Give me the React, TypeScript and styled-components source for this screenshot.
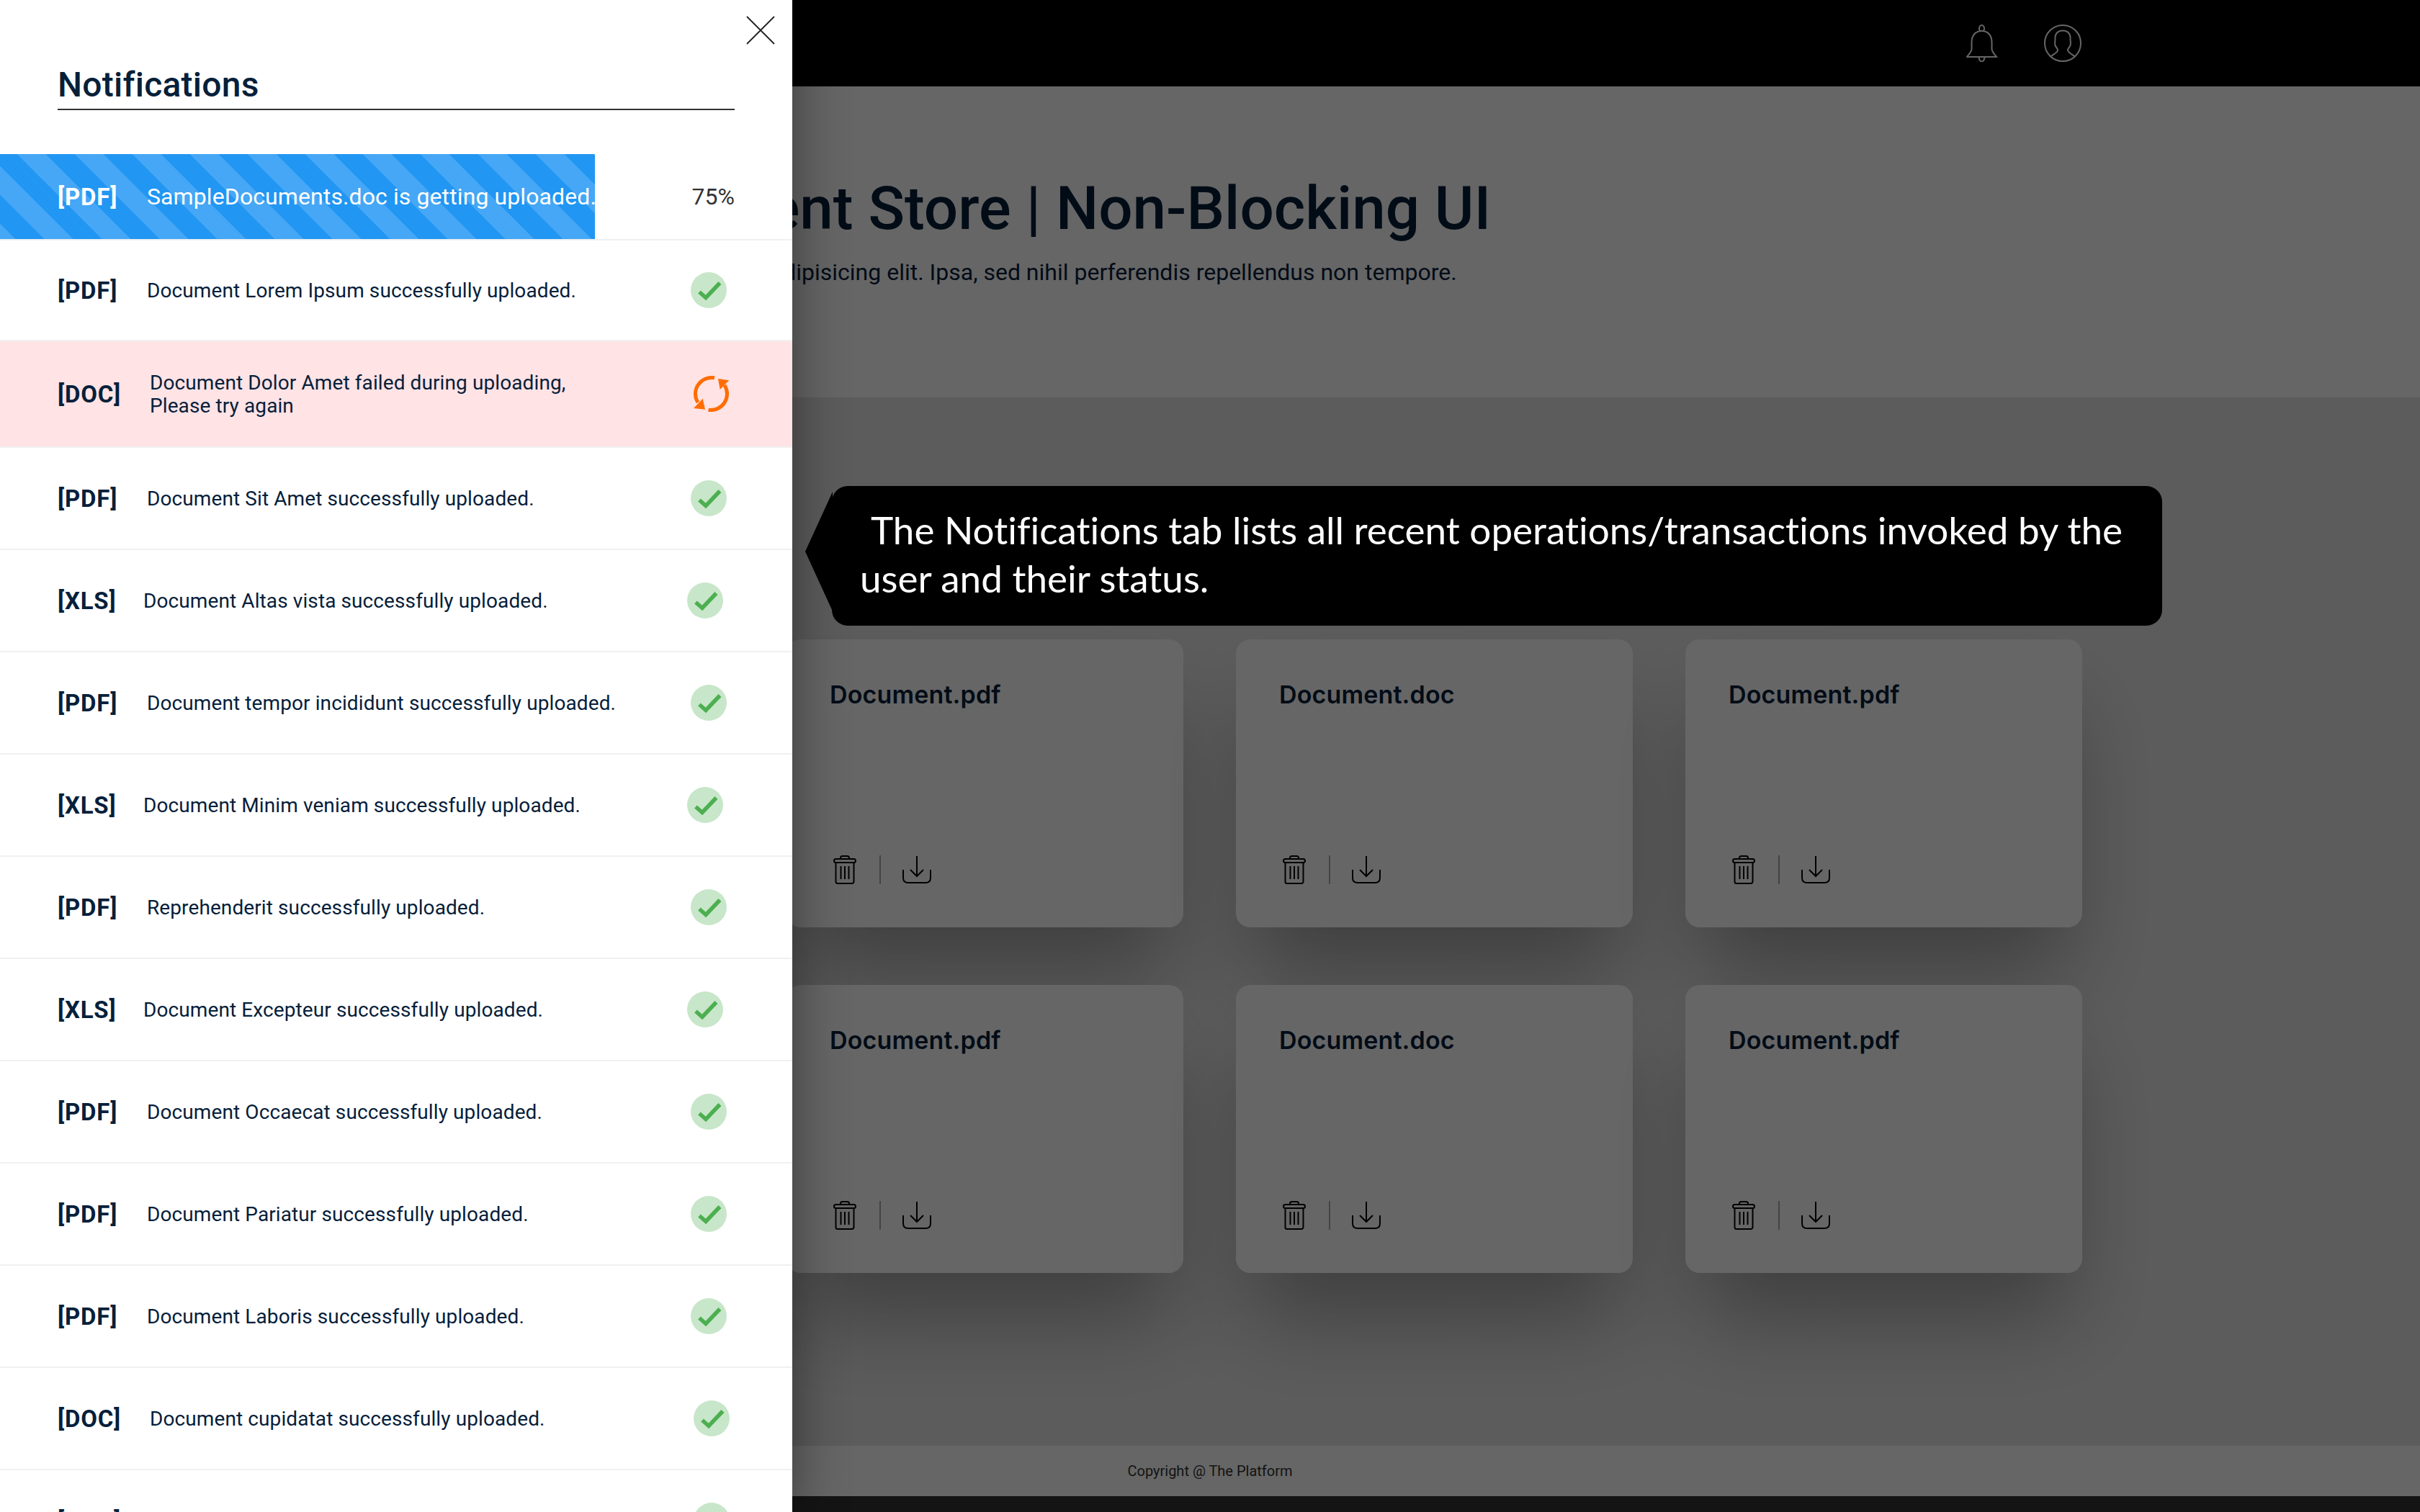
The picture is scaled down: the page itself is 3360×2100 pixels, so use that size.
import React from "react";
import styled, { createGlobalStyle } from "styled-components";

const Global = createGlobalStyle`
  html, body { margin: 0; padding: 0; background: #fff; }
  * { box-sizing: border-box; }
  body { font-family: Roboto, "Noto Sans", sans-serif; color: #06203a; }
`;

const Stage = styled.div`
  position: relative;
  width: 3360px;
  height: 2100px;
  overflow: hidden;
  display: flex;
  flex-direction: column;
  background: #e6e6e6;
`;

const TopBar = styled.header`
  height: 120px;
  flex: none;
  background: #000;
  display: flex;
  align-items: center;
  justify-content: flex-end;
  gap: 64px;
  padding: 0 470px 0 0;
  color: #fff;
`;

const Hero = styled.section`
  height: 432px;
  flex: none;
  background: #fff;
  display: flex;
  flex-direction: column;
  padding-top: 113px;
`;

const HeroTitle = styled.h1`
  margin: 0 0 0 801px;
  font-size: 83.5px;
  line-height: 114px;
  font-weight: 500;
  white-space: nowrap;
  color: #06203a;
`;

const HeroText = styled.p`
  margin: 11px 0 0 493px;
  font-size: 32px;
  line-height: 40px;
  white-space: nowrap;
  color: #06203a;
`;

const Main = styled.main`
  flex: 1;
  padding: 336px 0 0 1092px;
`;

const CardGrid = styled.div`
  display: grid;
  grid-template-columns: repeat(3, 551px);
  grid-auto-rows: 400px;
  column-gap: 73px;
  row-gap: 80px;
`;

const Card = styled.article`
  background: #fff;
  border-radius: 20px;
  padding: 53px 60px 60px;
  display: flex;
  flex-direction: column;
  justify-content: space-between;
  box-shadow: 0 80px 120px -20px rgba(0, 0, 0, 0.32);
`;

const CardTitle = styled.h3`
  margin: 0;
  font-family: Inter, sans-serif;
  font-size: 34px;
  line-height: 48px;
  font-weight: 600;
  letter-spacing: 0.15px;
  color: #06203a;
`;

const CardActions = styled.div`
  display: flex;
  align-items: center;
  margin-left: 5px;
  color: #000;
`;

const ActionDivider = styled.span`
  width: 2px;
  height: 40px;
  margin: 0 30px 0 32px;
  background: #aaa;
`;

const Footer = styled.footer`
  height: 70px;
  flex: none;
  background: #fff;
  display: flex;
  align-items: center;
  justify-content: center;
  font-size: 20px;
  color: #333;
`;

const BottomStrip = styled.div`
  height: 22px;
  flex: none;
  background: #333;
`;

const Scrim = styled.div`
  position: absolute;
  inset: 0;
  background: rgba(0, 0, 0, 0.6);
`;

const Callout = styled.div`
  position: absolute;
  left: 1155px;
  top: 675px;
  width: 1847px;
  height: 194px;
  padding: 0 0 6px 39px;
  background: #000;
  border-radius: 22px;
  color: #fff;
  font-family: Lato, "Open Sans", sans-serif;
  font-size: 53px;
  line-height: 67px;
  font-variant-ligatures: none;
  display: flex;
  align-items: center;
  &::before {
    content: "";
    position: absolute;
    left: -37px;
    top: 8px;
    border-style: solid;
    border-width: 83px 38px 83px 0;
    border-color: transparent #000 transparent transparent;
  }
`;

const CalloutIndent = styled.span`
  padding-left: 15px;
`;

const Drawer = styled.aside`
  position: absolute;
  left: 0;
  top: 0;
  bottom: 0;
  width: 1100px;
  background: #fff;
  overflow: hidden;
  box-shadow: 0 0 70px rgba(0, 0, 0, 0.45);
`;

const CloseButton = styled.button`
  position: absolute;
  right: 24px;
  top: 22px;
  width: 40px;
  height: 40px;
  padding: 0;
  border: 0;
  background: none;
  color: #222;
`;

const DrawerHeader = styled.div`
  margin: 0 80px;
  padding-top: 90px;
  height: 153px;
  border-bottom: 2px solid #333;
`;

const DrawerTitle = styled.h2`
  margin: 0;
  font-size: 48px;
  line-height: 56px;
  font-weight: 500;
  letter-spacing: 0.25px;
  color: #06203a;
`;

const List = styled.div`
  margin-top: 61px;
`;

const UploadRow = styled.div`
  height: 120px;
  display: flex;
  align-items: flex-start;
  justify-content: space-between;
  padding-right: 80px;
  border-bottom: 2px solid #f0f0f0;
`;

const UploadBar = styled.div`
  width: 826px;
  height: 118px;
  padding-left: 80px;
  display: flex;
  align-items: center;
  overflow: hidden;
  color: #fff;
  background-color: #2196f3;
  background-image: linear-gradient(
    45deg,
    transparent 15%,
    rgba(255, 255, 255, 0.16) 15% 40%,
    transparent 40% 65%,
    rgba(255, 255, 255, 0.16) 65% 90%,
    transparent 90%
  );
  background-size: 80px 80px;
`;

const UploadMessage = styled.span`
  font-size: 32px;
  letter-spacing: 0.1px;
  white-space: nowrap;
`;

const Percent = styled.span`
  align-self: center;
  font-size: 32px;
  color: #333;
`;

const Row = styled.div<{ $failed?: boolean; $height?: number }>`
  height: ${(p) => p.$height ?? 142}px;
  display: flex;
  align-items: center;
  padding-left: 80px;
  background: ${(p) => (p.$failed ? "#ffe3e5" : "#fff")};
  border-bottom: 2px solid #f0f0f0;
`;

const Tag = styled.span<{ $width: number }>`
  flex: none;
  width: ${(p) => p.$width}px;
  margin-right: 40px;
  font-size: 33px;
  font-weight: 700;
  letter-spacing: 0.8px;
  white-space: nowrap;
`;

const Message = styled.span`
  flex: none;
  width: 755px;
  padding-top: 2px;
  font-size: 28px;
  line-height: 32px;
  letter-spacing: 0.1px;
  white-space: nowrap;
`;

const Tick = styled.span`
  flex: none;
  width: 50px;
  height: 50px;
  border-radius: 50%;
  background: #c8e6c9;
  display: flex;
`;

const tagWidth: Record<string, number> = { PDF: 84, DOC: 88, XLS: 79 };

const rows: [string, string][] = [
  ["PDF", "Document Sit Amet successfully uploaded."],
  ["XLS", "Document Altas vista successfully uploaded."],
  ["PDF", "Document tempor incididunt successfully uploaded."],
  ["XLS", "Document Minim veniam successfully uploaded."],
  ["PDF", "Reprehenderit successfully uploaded."],
  ["XLS", "Document Excepteur successfully uploaded."],
  ["PDF", "Document Occaecat successfully uploaded."],
  ["PDF", "Document Pariatur successfully uploaded."],
  ["PDF", "Document Laboris successfully uploaded."],
  ["DOC", "Document cupidatat successfully uploaded."],
  ["DOC", "Document magna successfully uploaded."],
];

const Check = () => (
  <Tick>
    <svg width="50" height="50" viewBox="0 0 50 50" fill="none">
      <path d="M12 27.5l9 8 19.5-20.5" stroke="#4caf50" strokeWidth="5.5" />
    </svg>
  </Tick>
);

const Retry = () => (
  <svg width="50" height="50" viewBox="0 0 50 50" fill="none">
    <path d="M29 2.8A22.5 22.5 0 0 0 6 37" stroke="#ff6d00" strokeWidth="5" />
    <path d="M20.5 47.3A22.5 22.5 0 0 0 43 13" stroke="#ff6d00" strokeWidth="5" />
    <path d="M0 45l16 1.7-3.3-15z" fill="#ff6d00" />
    <path d="M34 4l15.3 2.3L36.7 19z" fill="#ff6d00" />
  </svg>
);

const Bell = () => (
  <svg width="44" height="52" viewBox="0 0 44 52" fill="none" stroke="currentColor" strokeWidth="2">
    <ellipse cx="21.5" cy="5.5" rx="3.5" ry="4.5" fill="#000" />
    <path d="M21.5 9C13 9 7.5 15 7.5 25v9C7.5 38 3 42 1 45h41c-2-3-6.500-7-6.500-11v-9C35.500 15 30 9 21.500 9z" fill="#000" />
    <path d="M17.500 45c0 4 2 6.500 4 6.500s4-2.500 4-6.500" />
  </svg>
);

const Avatar = () => (
  <svg width="52" height="52" viewBox="0 0 52 52" fill="none" stroke="currentColor" strokeWidth="2">
    <circle cx="26" cy="26" r="25" />
    <path d="M8.500 45C14 41 19 38.500 19 36c0-3-2-3.500-3.500-7-1-3 0-5 0-9C15 12 20 8.500 26 8.500S37 12 36.500 20c0 4 1 6 0 9-1.500 3.500-3.500 4-3.500 7 0 2.500 5 5 10.500 9" />
  </svg>
);

const Trash = () => (
  <svg width="32" height="40" viewBox="0 0 32 40" fill="none" stroke="currentColor" strokeWidth="2">
    <rect x="1" y="5" width="30" height="5" rx="2.500" />
    <path d="M10 5V3.500C10 2 11 1 12.500 1h7C21 1 22 2 22 3.500V5" />
    <path d="M3.500 10v26.500a2.500 2.500 0 0 0 2.500 2.500h20a2.500 2.500 0 0 0 2.500-2.500V10" />
    <path d="M10.500 15v18M16 15v18M21.500 15v18" />
  </svg>
);

const Download = () => (
  <svg width="40" height="38" viewBox="0 0 40 38" fill="none" stroke="currentColor" strokeWidth="2">
    <path d="M20 0v27M11 19l9 9 9-9" />
    <path d="M1 19v11c0 4.500 2.500 7 7 7h24c4.500 0 7-2.500 7-7V19" />
  </svg>
);

const Close = () => (
  <svg width="40" height="40" viewBox="0 0 40 40" fill="none" stroke="currentColor" strokeWidth="1.8">
    <path d="M1 1l38 38M39 1L1 39" />
  </svg>
);

const docs = ["Document.pdf", "Document.doc", "Document.pdf", "Document.pdf", "Document.doc", "Document.pdf"];

export default function App() {
  return (
    <Stage>
      <Global />
      <TopBar>
        <Bell />
        <Avatar />
      </TopBar>
      <Hero>
        <HeroTitle>Document Store | Non-Blocking UI</HeroTitle>
        <HeroText>
          Lorem ipsum dolor sit amet consectetur adipisicing elit. Ipsa, sed nihil perferendis repellendus non tempore.
        </HeroText>
      </Hero>
      <Main>
        <CardGrid>
          {docs.map((d, i) => (
            <Card key={i}>
              <CardTitle>{d}</CardTitle>
              <CardActions>
                <Trash />
                <ActionDivider />
                <Download />
              </CardActions>
            </Card>
          ))}
        </CardGrid>
      </Main>
      <Footer>Copyright @ The Platform</Footer>
      <BottomStrip />
      <Scrim />
      <Callout>
        <div>
          <CalloutIndent>The Notifications tab lists all recent operations/transactions invoked by the</CalloutIndent>
          <br />
          user and their status.
        </div>
      </Callout>
      <Drawer>
        <CloseButton aria-label="Close">
          <Close />
        </CloseButton>
        <DrawerHeader>
          <DrawerTitle>Notifications</DrawerTitle>
        </DrawerHeader>
        <List>
          <UploadRow>
            <UploadBar>
              <Tag $width={tagWidth.PDF}>[PDF]</Tag>
              <UploadMessage>SampleDocuments.doc is getting uploaded.</UploadMessage>
            </UploadBar>
            <Percent>75%</Percent>
          </UploadRow>
          <Row $height={140}>
            <Tag $width={tagWidth.PDF}>[PDF]</Tag>
            <Message>Document Lorem Ipsum successfully uploaded.</Message>
            <Check />
          </Row>
          <Row $failed $height={148}>
            <Tag $width={tagWidth.DOC}>[DOC]</Tag>
            <Message>
              Document Dolor Amet failed during uploading,
              <br />
              Please try again
            </Message>
            <Retry />
          </Row>
          {rows.map(([kind, text], i) => (
            <Row key={i}>
              <Tag $width={tagWidth[kind]}>[{kind}]</Tag>
              <Message>{text}</Message>
              <Check />
            </Row>
          ))}
        </List>
      </Drawer>
    </Stage>
  );
}
